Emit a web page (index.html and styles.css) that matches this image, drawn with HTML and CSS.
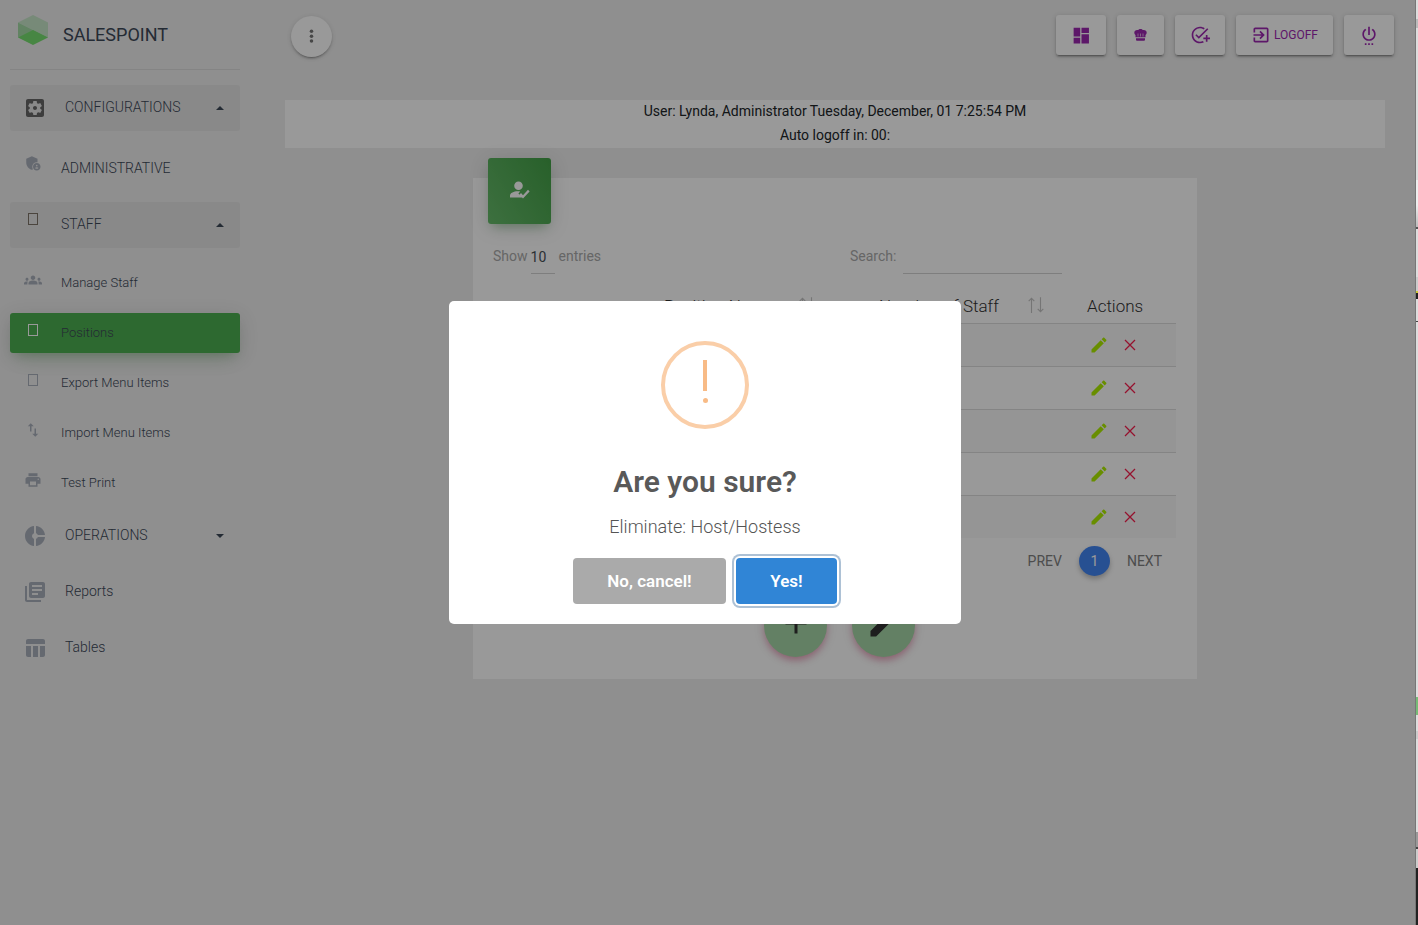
FILE: index.html
```html
<!DOCTYPE html>
<html lang="en">
<head>
<meta charset="utf-8">
<title>Salespoint</title>
<link rel="stylesheet" href="styles.css">
</head>
<body>
<div class="app">
  <aside class="sidebar">
    <div class="brand">
      <svg class="brand-logo" viewBox="0 0 30 30"><path fill="#c6e6c8" d="M15 0l15 7.500V22.500L0 7.500z"/><path fill="#a3dba6" d="M0 7.500L30 22.500H0z"/><path fill="#77df70" d="M15 15l15 7.500L15 30 0 22.500z"/></svg>
      <span>SALESPOINT</span>
    </div>
    <nav class="nav">
      <a class="item open dark"><svg class="icon" viewBox="0 0 24 24"><path d="M12 10c-1.100 0-2 .9-2 2s.9 2 2 2 2-.9 2-2-.9-2-2-2zm7-7H5c-1.110 0-2 .9-2 2v14c0 1.100.89 2 2 2h14c1.110 0 2-.9 2-2V5c0-1.100-.89-2-2-2zm-1.750 9c0 .23-.02.46-.05.68l1.480 1.160c.13.11.17.3.08.45l-1.400 2.420c-.09.15-.27.21-.43.15l-1.740-.7c-.36.28-.76.51-1.180.69l-.26 1.850c-.03.17-.18.3-.35.3h-2.800c-.17 0-.32-.13-.35-.29l-.26-1.850c-.43-.18-.82-.41-1.180-.69l-1.740.7c-.16.06-.34 0-.43-.15l-1.400-2.420c-.09-.15-.05-.34.08-.45l1.480-1.160c-.03-.23-.05-.46-.05-.69 0-.23.02-.46.05-.68l-1.480-1.160c-.13-.11-.17-.3-.08-.45l1.400-2.420c.09-.15.27-.21.43-.15l1.740.7c.36-.28.76-.51 1.180-.69l.26-1.850c.03-.17.18-.3.35-.3h2.800c.17 0 .32.13.35.29l.26 1.850c.43.18.82.41 1.180.69l1.740-.7c.16-.06.34 0 .43.15l1.400 2.420c.09.15.05.34-.08.45l-1.480 1.160c.03.23.05.46.05.69z"/></svg><span>CONFIGURATIONS</span><i class="caret up"></i></a>
      <a class="item nested first"><svg class="icon" viewBox="0 0 24 24"><path d="M17 11c.34 0 .67.04 1 .09V6.270L10.500 3 3 6.270v4.910c0 4.540 3.200 8.790 7.500 9.820.55-.13 1.080-.32 1.600-.55-.69-.98-1.100-2.170-1.100-3.450 0-3.310 2.690-6 6-6z"/><path d="M17 12c-2.760 0-5 2.240-5 5s2.240 5 5 5 5-2.240 5-5-2.240-5-5-5zm0 2.380c.62 0 1.120.51 1.120 1.120s-.51 1.120-1.120 1.120-1.120-.51-1.120-1.120.5-1.120 1.120-1.120zm0 5.370c-.93 0-1.740-.46-2.240-1.170.05-.72 1.510-1.080 2.240-1.080s2.190.36 2.240 1.080c-.5.71-1.310 1.170-2.240 1.170z"/></svg><span>ADMINISTRATIVE</span></a>
      <a class="item nested open dark"><i class="box"></i><span>STAFF</span><i class="caret up"></i></a>
      <div class="sub">
        <a class="item nested"><svg class="icon" viewBox="0 0 24 24"><path d="M12 12.750c1.630 0 3.070.39 4.240.9 1.080.48 1.760 1.560 1.760 2.730V18H6v-1.610c0-1.180.68-2.260 1.760-2.730 1.170-.52 2.610-.91 4.240-.91zM4 13c1.100 0 2-.9 2-2s-.9-2-2-2-2 .9-2 2 .9 2 2 2zm1.130 1.100C4.760 14.040 4.390 14 4 14c-.99 0-1.930.21-2.780.58C.48 14.900 0 15.620 0 16.430V18h4.500v-1.610c0-.83.23-1.610.63-2.290zM20 13c1.100 0 2-.9 2-2s-.9-2-2-2-2 .9-2 2 .9 2 2 2zm4 3.430c0-.81-.48-1.530-1.220-1.850C21.930 14.210 20.990 14 20 14c-.39 0-.76.04-1.130.1.4.68.63 1.460.63 2.290V18H24v-1.570zM12 6c1.660 0 3 1.340 3 3s-1.340 3-3 3-3-1.340-3-3 1.340-3 3-3z"/></svg><span>Manage Staff</span></a>
        <a class="item nested active"><i class="box"></i><span>Positions</span></a>
        <a class="item nested"><i class="box"></i><span>Export Menu Items</span></a>
        <a class="item nested"><svg class="icon" viewBox="0 0 24 24"><path d="M16 17.010V10h-2v7.010h-3L15 21l4-3.990h-3zM9 3L5 6.990h3V14h2V6.990h3L9 3z"/></svg><span>Import Menu Items</span></a>
        <a class="item nested"><svg class="icon" viewBox="0 0 24 24"><path d="M19 8H5c-1.660 0-3 1.340-3 3v6h4v4h12v-4h4v-6c0-1.660-1.340-3-3-3zm-3 11H8v-5h8v5zm3-7c-.55 0-1-.45-1-1s.45-1 1-1 1 .45 1 1-.45 1-1 1zm-1-9H6v4h12V3z"/></svg><span>Test Print</span></a>
      </div>
      <a class="item"><svg class="icon" viewBox="0 0 24 24"><path d="M11 9.160V2c-5 .5-9 4.790-9 10s4 9.500 9 10v-7.160c-1-.41-2-1.520-2-2.840s1-2.430 2-2.840zM14.860 11H22c-.48-4.750-4-8.530-9-9v7.160c1 .3 1.520.98 1.860 1.840zM13 14.840V22c5-.47 8.520-4.250 9-9h-7.140c-.34.86-.86 1.540-1.860 1.840z"/></svg><span>OPERATIONS</span><i class="caret down"></i></a>
      <a class="item"><svg class="icon" viewBox="0 0 24 24"><path d="M4 6H2v14c0 1.100.9 2 2 2h14v-2H4V6zm16-4H8c-1.100 0-2 .9-2 2v12c0 1.100.9 2 2 2h12c1.100 0 2-.9 2-2V4c0-1.100-.9-2-2-2zm-1 9H9V9h10v2zm-4 4H9v-2h6v2zm4-8H9V5h10v2z"/></svg><span>Reports</span></a>
      <a class="item"><svg class="icon" viewBox="0 0 24 24"><path d="M10 10.020h5V21h-5zM17 21h3c1.100 0 2-.9 2-2v-9h-5v11zm3-18H5c-1.100 0-2 .9-2 2v3h19V5c0-1.100-.9-2-2-2zM3 19c0 1.100.9 2 2 2h3V10H3v9z"/></svg><span>Tables</span></a>
    </nav>
  </aside>

  <main class="main">
    <header class="topbar">
      <button class="round"><svg width="17" height="17" viewBox="0 0 24 24"><g fill="#777"><circle cx="12" cy="4.600" r="2.500"/><circle cx="12" cy="11.500" r="2.500"/><circle cx="12" cy="18.400" r="2.500"/></g></svg></button>
      <div class="actions">
        <button class="tool"><svg width="21" height="21" viewBox="0 0 24 24"><path d="M3 3h7.500v10H3zm9 0h8.500v6H12zm0 7.500h8.500V21H12zm-9 4h7.500V21H3z"/></svg></button>
        <button class="tool narrow"><svg width="14" height="14" viewBox="0 0 14 14"><path d="M2 10.300h9v1.500a1 1 0 0 1-1 1H3a1 1 0 0 1-1-1zM6.500 1c1 0 1.900.4 2.400 1.100C11 1.600 12.700 2.800 12.700 4.600c0 1.200-.5 2-1.200 2.400v2.200h-10V7C.8 6.600.3 5.800.3 4.600c0-1.800 1.700-3 3.800-2.500C4.600 1.400 5.500 1 6.500 1z"/><path stroke="#fff" stroke-width=".6" d="M4 5.500v3M6.500 5.500v3M9 5.500v3"/></svg></button>
        <button class="tool"><svg class="tool-icon" viewBox="0 0 24 24"><path d="M22 5.180L10.590 16.600l-4.240-4.240 1.410-1.410 2.830 2.830 10-10L22 5.180zM12 20c-4.410 0-8-3.590-8-8s3.590-8 8-8c1.570 0 3.040.46 4.280 1.250l1.450-1.450C16.100 2.670 14.130 2 12 2 6.480 2 2 6.480 2 12s4.480 10 10 10c1.730 0 3.360-.44 4.780-1.220l-1.500-1.500c-1 .46-2.110.72-3.280.72zm7-5h-3v2h3v3h2v-3h3v-2h-3v-3h-2v3z"/></svg></button>
        <button class="tool wide"><svg class="tool-icon" viewBox="0 0 24 24"><path d="M10.090 15.590L11.500 17l5-5-5-5-1.410 1.410L12.670 11H3v2h9.670l-2.580 2.590zM19 3H5c-1.110 0-2 .9-2 2v4h2V5h14v14H5v-4H3v4c0 1.100.89 2 2 2h14c1.100 0 2-.9 2-2V5c0-1.100-.9-2-2-2z"/></svg><span>LOGOFF</span></button>
        <button class="tool"><svg class="tool-icon" viewBox="0 0 24 24"><path d="M7 24h2v-2H7v2zm4 0h2v-2h-2v2zm2-22h-2v10h2V2zm3.560 2.440l-1.450 1.450C16.840 6.940 18 8.830 18 11c0 3.310-2.690 6-6 6s-6-2.690-6-6c0-2.170 1.160-4.060 2.880-5.120L7.440 4.440C5.360 5.880 4 8.280 4 11c0 4.420 3.580 8 8 8s8-3.580 8-8c0-2.720-1.360-5.120-3.440-6.560zM15 24h2v-2h-2v2z"/></svg></button>
      </div>
    </header>

    <div class="info">
      <div>User: Lynda, Administrator Tuesday, December, 01 7:25:54 PM</div>
      <div>Auto logoff in: 00:</div>
    </div>

    <section class="card">
      <div class="card-icon"><svg width="22" height="22" viewBox="0 0 22 22"><path fill="#fff" d="M9.500 2.500a4.300 4.300 0 1 1 0 8.600 4.300 4.300 0 0 1 0-8.600zM8.500 12.300c1 0 1.900.1 2.700.3L9.400 14.500l3.800 4H1v-1.700c0-3 4-4.500 7.500-4.500zM14 19.600l-3.600-3.900 1.600-1.600 2 2.100 5-5.400 1.600 1.600z"/></svg></div>
      <div class="filters">
        <label class="length">Show <span class="select">10</span> entries</label>
        <label class="search">Search: <span class="field"></span></label>
      </div>
      <div class="table">
        <div class="row head">
          <span></span>
          <span class="th">Position Name<svg class="sort" viewBox="0 0 16 16"><path d="M4 15V2M1.500 4.500L4 2l2.500 2.500M12 1v13M9.500 11.500L12 14l2.500-2.500"/></svg></span>
          <span class="th">Number of Staff<svg class="sort" viewBox="0 0 16 16"><path d="M4 15V2M1.500 4.500L4 2l2.500 2.500M12 1v13M9.500 11.500L12 14l2.500-2.500"/></svg></span>
          <span>Actions</span>
        </div>
        <div class="row"><span></span><span></span><span></span><span class="ops"><svg class="edit"><use href="#pencil"/></svg><svg class="del"><use href="#cross"/></svg></span></div>
        <div class="row"><span></span><span></span><span></span><span class="ops"><svg class="edit"><use href="#pencil"/></svg><svg class="del"><use href="#cross"/></svg></span></div>
        <div class="row"><span></span><span></span><span></span><span class="ops"><svg class="edit"><use href="#pencil"/></svg><svg class="del"><use href="#cross"/></svg></span></div>
        <div class="row"><span></span><span></span><span></span><span class="ops"><svg class="edit"><use href="#pencil"/></svg><svg class="del"><use href="#cross"/></svg></span></div>
        <div class="row"><span></span><span></span><span></span><span class="ops"><svg class="edit"><use href="#pencil"/></svg><svg class="del"><use href="#cross"/></svg></span></div>
      </div>
      <div class="pager"><span>PREV</span><span class="page">1</span><span>NEXT</span></div>
      <div class="fabs">
        <span class="fab"><svg width="36" height="36" viewBox="0 0 24 24"><path d="M19 13h-6v6h-2v-6H5v-2h6V5h2v6h6z"/></svg></span>
        <span class="fab"><svg width="36" height="36"><use href="#pencil"/></svg></span>
      </div>
    </section>
  </main>
</div>

<svg class="defs">
  <symbol id="pencil" viewBox="0 0 24 24"><path d="M3 17.250V21h3.750L17.810 9.940l-3.750-3.750L3 17.250zM20.710 7.040c.39-.39.39-1.020 0-1.410l-2.340-2.340c-.39-.39-1.020-.39-1.410 0l-1.830 1.830 3.750 3.750 1.830-1.830z"/></symbol>
  <symbol id="cross" viewBox="0 0 12 12"><path d="M1 1l10 10M11 1L1 11"/></symbol>
</svg>

<div class="overlay">
  <div class="modal">
    <div class="warn"><i class="bar"></i><i class="dot"></i></div>
    <h2>Are you sure?</h2>
    <p>Eliminate: Host/Hostess</p>
    <div class="buttons"><button class="btn cancel">No, cancel!</button><button class="btn confirm">Yes!</button></div>
  </div>
</div>
<div class="edge"></div>
</body>
</html>
```
FILE: styles.css
```css
* { box-sizing: border-box; }
body { margin: 0; width: 1418px; height: 925px; overflow: hidden; background: #eee; font-family: Roboto, "Liberation Sans", sans-serif; font-size: 14px; color: #3c4858; }
button { border: 0; padding: 0; font-family: inherit; }
.app { display: flex; width: 1415px; height: 925px; }
.defs { position: absolute; width: 0; height: 0; }

.sidebar { width: 255px; padding: 0 15px 0 10px; }
.brand { display: flex; height: 70px; border-bottom: 1px solid #dcdcdc; padding: 15px 0 0 8px; gap: 15px; font-size: 18px; line-height: 39px; }
.brand-logo { width: 30px; height: 30px; }
.nav { display: flex; flex-direction: column; gap: 10px; padding-top: 15px; }
.item { display: flex; align-items: center; height: 46px; padding: 0 16px 0 13px; border-radius: 3px; font-weight: 300; }
.item.open { background: #e5e5e5; }
.item span { flex: 1; line-height: 20px; margin-top: -2px; }
.icon { width: 24px; height: 24px; margin-right: 18px; fill: #a9afbb; }
.item.dark .icon { fill: #666; }
.item.first { margin-top: 5px; }
.nested .icon { width: 18px; height: 18px; margin: 0 19px 6px 1px; }
.nested.first .icon { margin-bottom: 12px; }
.nested.first span { margin-top: -2px; }
.box { width: 10px; height: 12px; border: 1px solid #a9afbb; margin: 0 23px 6px 5px; }
.dark .box { border-color: #7d7468; margin-bottom: 12px; }
.active .box { border-color: #fff; }
.caret { border: 4px solid transparent; }
.caret.up { border-bottom-color: #3c4858; border-top: 0; }
.caret.down { border-top-color: #3c4858; border-bottom: 0; }
.sub { display: flex; flex-direction: column; gap: 10px; margin-top: 5px; }
.sub .item { height: 40px; font-size: 13px; }
.sub .item span { margin-top: 0; }
.item.active { background: #4caf50; box-shadow: 0 12px 20px -10px rgba(76,175,80,.28), 0 4px 20px rgba(0,0,0,.12), 0 7px 8px -5px rgba(76,175,80,.2); }

.main { flex: 1; padding: 0 30px; }
.topbar { display: flex; justify-content: space-between; height: 100px; padding-left: 6px; margin-right: -9px; padding-top: 15px; align-items: flex-start; }
.round { width: 41px; height: 41px; margin-top: 1px; border-radius: 50%; background: #fff; box-shadow: 0 2px 2px rgba(0,0,0,.14), 0 3px 1px -2px rgba(0,0,0,.2), 0 1px 5px rgba(0,0,0,.12); display: flex; align-items: center; justify-content: center; }
.actions { display: flex; gap: 11px; }
.tool { display: flex; align-items: center; justify-content: center; gap: 3px; width: 50px; height: 40px; border-radius: 3px; background: #fff; color: #9c27b0; fill: #9c27b0; font-size: 12px; box-shadow: 0 2px 2px rgba(0,0,0,.18), 0 3px 1px -2px rgba(0,0,0,.2), 0 1px 5px rgba(0,0,0,.16); }
.tool.narrow { width: 47px; }
.tool.wide { width: 97px; }
.tool-icon { width: 20px; height: 20px; }
.info { height: 48px; background: #fff; text-align: center; line-height: 24px; color: #212529; }
.info div { position: relative; top: -1px; }

.card { width: 724px; height: 501px; margin: 30px auto 0; background: #fff; padding: 0 21px 0 15px; }
.card-icon { width: 63px; height: 66px; margin-top: -20px; float: left; border-radius: 3px; background: linear-gradient(60deg, #66bb6a, #43a047); display: flex; align-items: center; justify-content: center; padding-bottom: 3px; box-shadow: 0 4px 20px rgba(0,0,0,.14), 0 7px 10px -5px rgba(76,175,80,.4); }
.filters { clear: both; display: flex; height: 69px; color: #aaa; padding: 20px 0 0 5px; }
.length { width: 357px; line-height: 24px; display: flex; gap: 3px; }
.select { width: 24px; height: 30px; border-bottom: 1px solid #d2d2d2; padding-top: 1px; margin-right: 1px; color: #495057; }
.search { display: flex; gap: 7px; line-height: 25px; }
.field { width: 159px; height: 30px; border-bottom: 1px solid #d2d2d2; }
.card > .table { margin-top: -3px; }
.row { display: grid; grid-template-columns: 139px 210px 215px 119px; height: 43px; margin-left: 5px; align-items: center; border-top: 1px solid #ddd; }
.row:nth-child(even) { background: #f9f9f9; }
.row.head { height: 33px; padding-bottom: 2px; border: 0; color: #333; font-size: 17px; font-weight: 300; }
.row.head > :last-child { padding-left: 30px; }
.th { display: flex; justify-content: space-between; align-items: center; padding: 0 26px 0 32px; }
.th:nth-child(3) { padding: 0 12px 0 37px; }
.sort { width: 18px; height: 18px; margin-top: -1px; fill: none; stroke: #c4c4c4; }
.ops { display: flex; align-items: center; gap: 15px; padding-left: 32px; }
.edit { width: 20px; height: 20px; fill: #aeed00; }
.del { width: 12px; height: 12px; fill: none; stroke: #f91e4e; stroke-width: 1.300px; }
.pager { display: flex; align-items: center; height: 46px; justify-content: flex-end; gap: 17px; padding-right: 14px; color: #808080; }
.page { width: 31px; height: 30px; border-radius: 50%; background: #4285f4; color: #fff; text-align: center; line-height: 30px; box-shadow: 0 3px 5px rgba(0,0,0,.25); }
.fabs { display: flex; gap: 25px; margin: 10px 0 0 276px; }
.fab { width: 63px; height: 63px; border-radius: 50%; background: #a5d6a7; fill: #333; display: flex; align-items: center; justify-content: center; padding-bottom: 5px; box-shadow: 0 4px 7px -1px rgba(233,30,99,.35), 0 2px 12px rgba(0,0,0,.12); }

.overlay { position: absolute; inset: 0; display: flex; align-items: center; justify-content: center; padding-right: 8px; background: rgba(0,0,0,.4); }
.modal { width: 512px; height: 323px; background: #fff; border-radius: 5px; text-align: center; padding-top: 40px; color: #545454; }
.warn { width: 88px; height: 88px; margin: 0 auto; border: 4px solid #facea8; border-radius: 50%; display: flex; flex-direction: column; align-items: center; padding-top: 15px; gap: 7px; }
.bar { width: 4px; height: 31px; background: #f8bb86; }
.dot { width: 5px; height: 5px; border-radius: 50%; background: #f8bb86; }
.modal h2 { margin: 33px 0 0; font-size: 30px; line-height: 40px; font-weight: 600; color: #595959; }
.modal p { margin: 13px 0 0; font-size: 18px; line-height: 24px; font-weight: 300; }
.buttons { display: flex; gap: 10px; justify-content: center; margin-top: 19px; }
.btn { height: 46px; border-radius: 4px; color: #fff; font-size: 17px; font-weight: 600; }
.cancel { width: 153px; background: #aaa; }
.confirm { width: 101px; background: #3085d6; box-shadow: 0 0 0 2px #fff, 0 0 0 4px rgba(50,100,150,.4); }

.edge { position: absolute; right: 0; top: 0; width: 3px; height: 925px; border-left: 1px solid #777; background: linear-gradient(#ddd 0 19px, #bbb 19px 28px, #ddd 28px 180px, #eee 180px 205px, #bbb 227px, #555 227px 229px, #ddd 229px 277px, #ccc 277px 291px, #cc3 291px 293px, #222 293px 299px, #ddd 299px 321px, #444 321px 322px, #ddd 322px 697px, #7b7 697px 715px, #ddd 715px 731px, #ccc 731px 739px, #ddd 739px 832px, #999 832px 847px, #444 847px 849px, #ccc 849px 868px, #222 868px); }
```
